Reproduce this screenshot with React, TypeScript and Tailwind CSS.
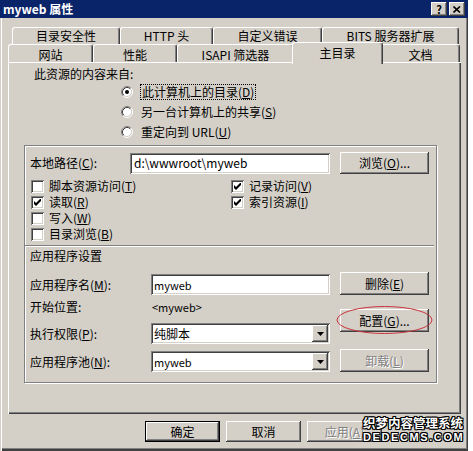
import React from 'react'

// 经典 Windows 立体边框
const raised =
  'bg-[#d4d0c8] shadow-[inset_-1px_-1px_0_#404040,inset_1px_1px_0_#fff,inset_-2px_-2px_0_#808080,inset_2px_2px_0_#d4d0c8]'
const sunken =
  'bg-white shadow-[inset_1px_1px_0_#808080,inset_-1px_-1px_0_#fff,inset_2px_2px_0_#404040,inset_-2px_-2px_0_#d4d0c8]'
const disabledText = 'text-[#808080] [text-shadow:1px_1px_0_#fff]'

function Radio({ checked }: { checked?: boolean }) {
  return (
    <svg width="12" height="12" viewBox="0 0 12 12" className="shrink-0">
      <circle cx="6" cy="6" r="4.5" fill="#fff" />
      <path d="M2.11 9.89A5.5 5.5 0 0 1 9.89 2.11" stroke="#808080" fill="none" />
      <path d="M9.89 2.11A5.5 5.5 0 0 1 2.11 9.89" stroke="#fff" fill="none" />
      <path d="M2.82 9.18A4.5 4.5 0 0 1 9.18 2.82" stroke="#404040" fill="none" />
      <path d="M9.18 2.82A4.5 4.5 0 0 1 2.82 9.18" stroke="#d4d0c8" fill="none" />
      {checked && <circle cx="6" cy="6" r="2" fill="#000" />}
    </svg>
  )
}

function Checkbox({ checked, label }: { checked?: boolean; label: React.ReactNode }) {
  return (
    <div className="flex items-center h-[16px]">
      <div className={`w-[13px] h-[13px] shrink-0 flex items-center justify-center ${sunken}`}>
        {checked && (
          <svg width="7" height="7" viewBox="0 0 7 7">
            <path d="M0 2v3l2 2 5-5V-1L2 4z" fill="#000" />
          </svg>
        )}
      </div>
      <span className="ml-[5px]">{label}</span>
    </div>
  )
}

function Button({
  children,
  w = 'w-[89px]',
  h = 'h-[23px]',
  disabled,
}: {
  children: React.ReactNode
  w?: string
  h?: string
  disabled?: boolean
}) {
  return (
    <div className={`${w} ${h} ${raised} flex items-center justify-center shrink-0 ${disabled ? disabledText : ''}`}>
      {children}
    </div>
  )
}

function Select({ value, small }: { value: string; small?: boolean }) {
  return (
    <div className={`w-[179px] h-[21px] ${sunken} flex items-center pl-[3px] pr-[2px]`}>
      <span className={`flex-1 ${small ? 'text-[11px]' : ''}`}>{value}</span>
      <div className={`w-[16px] h-[17px] ${raised} flex items-center justify-center`}>
        <svg width="7" height="4" viewBox="0 0 7 4">
          <path d="M0 0h7L3.5 4z" fill="#000" />
        </svg>
      </div>
    </div>
  )
}

export default function App() {
  const row1 = [
    { label: '目录安全性', w: 'w-[108px]' },
    { label: 'HTTP 头', w: 'w-[93px]' },
    { label: '自定义错误', w: 'w-[109px]' },
    { label: 'BITS 服务器扩展', w: 'w-[137px]' },
  ]
  const tab =
    'h-full flex items-center justify-center border-l border-t border-r border-white border-r-[#404040] rounded-t-[3px] shadow-[inset_-1px_0_0_#808080]'

  return (
    <div className="w-[473px] h-[451px] flex bg-white overflow-hidden font-[Noto_Sans_CJK_SC,sans-serif] text-[12px] leading-[16px] text-black relative">
      {/* 窗口 */}
      <div className="w-[468px] h-[451px] bg-[#d4d0c8] flex flex-col shadow-[inset_1px_0_0_#d4d0c8,inset_2px_0_0_#fff,inset_-1px_-2px_0_#404040,inset_-2px_-3px_0_#808080]">
        {/* 标题栏 */}
        <div className="h-[18px] bg-[#0a246a] flex items-center pl-[3px] pr-[3px]">
          <span className="text-white font-bold text-[12px] leading-[16px]">myweb 属性</span>
          <div className="ml-auto flex gap-[2px]">
            <div className={`w-[16px] h-[14px] ${raised} flex items-center justify-center font-bold text-[11px] leading-[14px]`}>?</div>
            <div className={`w-[16px] h-[14px] ${raised} flex items-center justify-center`}>
              <svg width="8" height="7" viewBox="0 0 8 7">
                <path d="M0.5 0.5L7 6.5M7 0.5L0.5 6.5" stroke="#000" strokeWidth="1.6" />
              </svg>
            </div>
          </div>
        </div>

        {/* 选项卡 */}
        <div className="mt-[9px] h-[17px] flex ml-[12px]">
          {row1.map(t => (
            <div key={t.label} className={`${t.w} ${tab}`}>{t.label}</div>
          ))}
        </div>
        <div className="h-[18px] flex items-start ml-[8px]">
          <div className={`w-[85px] ${tab} pt-[2px]`}>网站</div>
          <div className={`w-[84px] ${tab} pt-[2px]`}>性能</div>
          <div className={`w-[117px] ${tab} pt-[2px]`}>ISAPI 筛选器</div>
          <div className="w-[91px] -mx-[2px] -mt-[2px] h-[22px] relative z-10 bg-[#d4d0c8] flex items-center justify-center border-l border-t border-r border-white border-r-[#404040] rounded-t-[3px] shadow-[inset_-1px_0_0_#808080] pb-[2px]">
            主目录
          </div>
          <div className={`w-[79px] ${tab} pt-[2px]`}>文档</div>
        </div>

        {/* 面板 */}
        <div className="ml-[8px] w-[453px] h-[352px] flex flex-col shadow-[inset_1px_1px_0_#fff,inset_-1px_-1px_0_#404040,inset_-2px_-2px_0_#808080]">
          <div className="mt-[4px] h-[16px] pl-[26px]">此资源的内容来自:</div>
          <div className="flex flex-col pl-[113px]">
            <div className="h-[20px] flex items-center gap-[7px]">
              <Radio checked />
              <span className="border border-dotted border-black px-[1px] leading-[14px]">
                此计算机上的目录(<u>D</u>)
              </span>
            </div>
            <div className="h-[20px] flex items-center gap-[8px]">
              <Radio />
              <span>另一台计算机上的共享(<u>S</u>)</span>
            </div>
            <div className="h-[20px] flex items-center gap-[8px]">
              <Radio />
              <span>重定向到 URL(<u>U</u>)</span>
            </div>
          </div>

          {/* 分组框 */}
          <div className="mt-[3px] ml-[16px] w-[413px] h-[238px] border border-[#808080] shadow-[1px_1px_0_#fff,inset_1px_1px_0_#fff] flex flex-col">
            <div className="mt-[6px] h-[22px] flex items-center pl-[5px]">
              <span className="w-[100px]">本地路径(<u>C</u>):</span>
              <div className={`w-[200px] h-[21px] ${sunken} flex items-center pl-[4px]`}>d:\wwwroot\myweb</div>
              <div className="ml-[10px]">
                <Button h="h-[22px]">浏览(<u>O</u>)...</Button>
              </div>
            </div>

            <div className="mt-[4px] flex pl-[6px]">
              <div className="w-[200px] flex flex-col">
                <Checkbox label={<>脚本资源访问(<u>T</u>)</>} />
                <Checkbox checked label={<>读取(<u>R</u>)</>} />
                <Checkbox label={<>写入(<u>W</u>)</>} />
                <Checkbox label={<>目录浏览(<u>B</u>)</>} />
              </div>
              <div className="flex flex-col">
                <Checkbox checked label={<>记录访问(<u>V</u>)</>} />
                <Checkbox checked label={<>索引资源(<u>I</u>)</>} />
              </div>
            </div>

            <div className="mt-[3px] w-[409px] h-[2px] border-t border-[#808080] border-b border-b-white" />
            <div className="mt-[1px] h-[16px] pl-[5px]">应用程序设置</div>

            <div className="flex">
              <div className="flex flex-col pl-[5px]">
                <div className="mt-[10px] h-[21px] flex items-center">
                  <span className="w-[121px]">应用程序名(<u>M</u>):</span>
                  <div className={`w-[179px] h-[21px] ${sunken} flex items-center pl-[3px] text-[11px]`}>myweb</div>
                </div>
                <div className="mt-[4px] h-[16px] flex items-center">
                  <span className="w-[121px]">开始位置:</span>
                  <span className="pl-[1px] text-[11px]">&lt;myweb&gt;</span>
                </div>
                <div className="mt-[8px] h-[21px] flex items-center">
                  <span className="w-[121px]">执行权限(<u>P</u>):</span>
                  <Select value="纯脚本" />
                </div>
                <div className="mt-[7px] h-[21px] flex items-center">
                  <span className="w-[121px]">应用程序池(<u>N</u>):</span>
                  <Select value="myweb" small />
                </div>
              </div>
              <div className="ml-[10px] flex flex-col">
                <div className="mt-[8px]">
                  <Button>删除(<u>E</u>)</Button>
                </div>
                <div className="mt-[14px] relative">
                  <Button>配置(<u>G</u>)...</Button>
                  <svg className="absolute -left-[4px] -top-[4px]" width="97" height="30" viewBox="0 0 97 30">
                    <ellipse cx="48.5" cy="15" rx="47.5" ry="13.5" fill="none" stroke="#c8343c" strokeWidth="1" />
                  </svg>
                </div>
                <div className="mt-[17px]">
                  <Button disabled>卸载(<u>L</u>)</Button>
                </div>
              </div>
            </div>
          </div>
        </div>

        {/* 底部按钮 */}
        <div className="mt-[7px] ml-[145px] flex gap-[6px]">
          <div className="w-[75px] h-[21px] border border-black flex">
            <div className={`flex-1 ${raised} flex items-center justify-center`}>确定</div>
          </div>
          <Button w="w-[75px]" h="h-[21px]">取消</Button>
          <Button w="w-[75px]" h="h-[21px]" disabled>应用(<u>A</u>)</Button>
        </div>
      </div>

      {/* 水印 */}
      <div className="absolute left-[363px] top-[416px] flex flex-col items-start text-white font-bold [text-shadow:1px_0_0_#000,-1px_0_0_#000,0_1px_0_#000,0_-1px_0_#000,1px_1px_0_#000,-1px_-1px_0_#000,1px_-1px_0_#000,-1px_1px_0_#000]">
        <span className="text-[12.5px] leading-[14px]">织梦内容管理系统</span>
        <span className="mt-[2px] font-[Liberation_Sans,sans-serif] text-[11px] leading-[11px] tracking-[1.6px]">DEDECMS.COM</span>
      </div>
    </div>
  )
}
